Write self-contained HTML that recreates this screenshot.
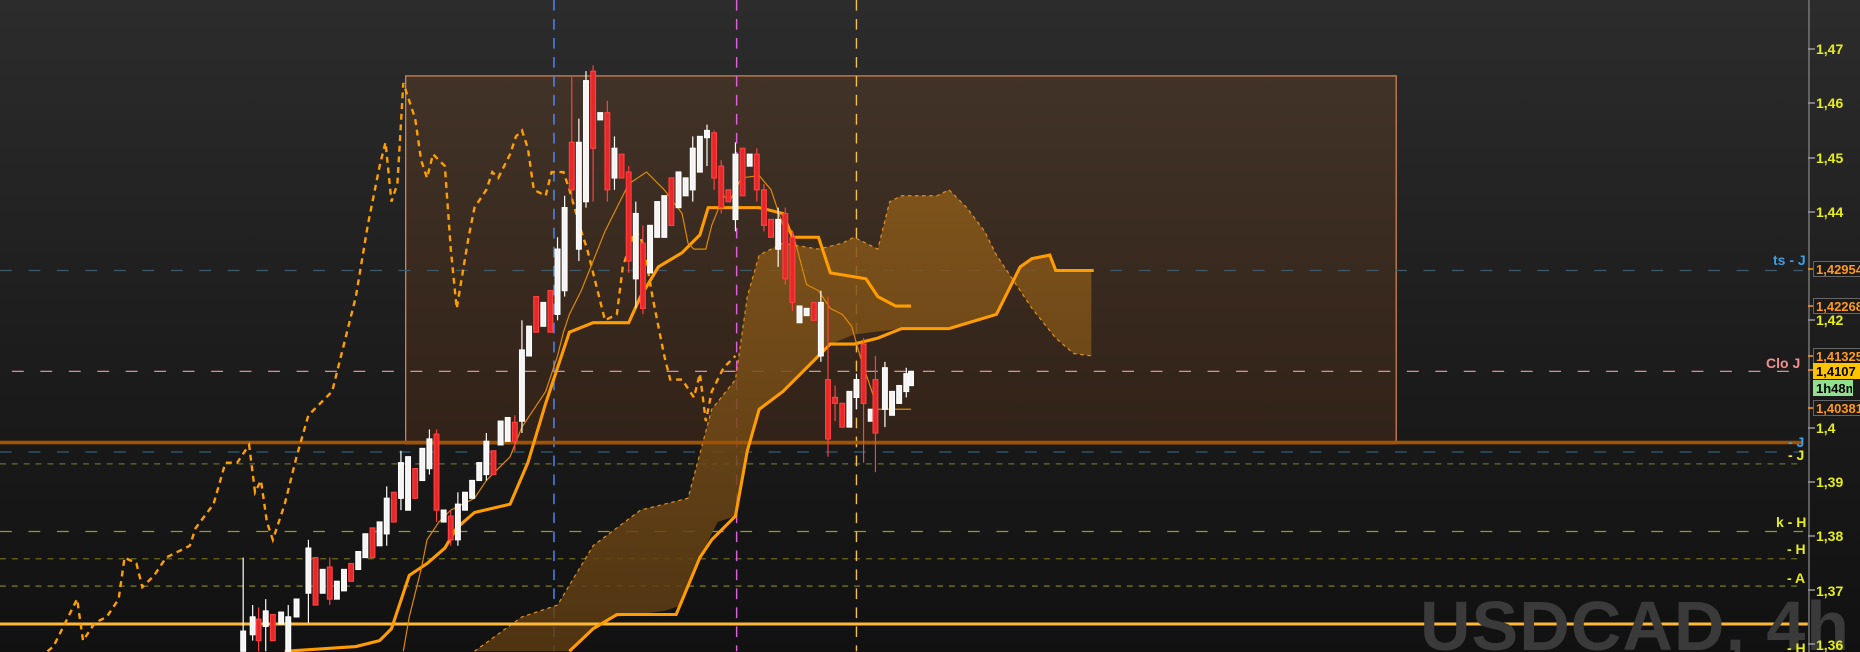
<!DOCTYPE html>
<html><head><meta charset="utf-8"><style>
html{margin:0;padding:0;width:1860px;height:652px;overflow:hidden;background:#111;}
body{margin:0;padding:0;width:1860px;height:652px;overflow:hidden;position:relative;background:linear-gradient(#2c2c2c,#1c1c1c 55%,#111);font-family:"Liberation Sans",sans-serif;}
svg{position:absolute;left:0;top:0;}
.t{position:absolute;font-weight:bold;font-size:14px;color:#e6ee1a;line-height:16px;white-space:nowrap;}
.b{position:absolute;left:1813px;width:52px;height:16px;font-weight:bold;font-size:13px;line-height:15px;color:#ff9a1e;background:#1a1a1a;border:1px solid #666;padding-left:2px;box-sizing:border-box;overflow:hidden;white-space:nowrap;}
.l{position:absolute;font-weight:bold;font-size:14px;line-height:16px;white-space:nowrap;}
</style></head><body>
<svg width="1860" height="652" viewBox="0 0 1568 549.6" preserveAspectRatio="none">
<defs>
<linearGradient id="bx" x1="0" y1="0" x2="0" y2="1"><stop offset="0" stop-color="#4a3628" stop-opacity=".75"/><stop offset="1" stop-color="#3a2518" stop-opacity=".75"/></linearGradient>
<linearGradient id="cl" x1="0" y1="0" x2="0" y2="1"><stop offset="0" stop-color="#8a5a1a" stop-opacity=".85"/><stop offset="1" stop-color="#5a3a12" stop-opacity=".85"/></linearGradient>
</defs>
<rect x="342" y="64" width="835" height="310" fill="url(#bx)" stroke="#e08a55" stroke-width="1"/>
<g stroke-dasharray="10,14" stroke-width="1" fill="none">
<line x1="0" y1="228" x2="1520" y2="228" stroke="#3f5a6a"/>
<line x1="10" y1="313" x2="1520" y2="313" stroke="#f0a0a8"/>
<line x1="0" y1="381" x2="1520" y2="381" stroke="#2f5f78"/>
<line x1="0" y1="391" x2="1520" y2="391" stroke="#6a6a30" stroke-dasharray="5,5"/>
<line x1="0" y1="448" x2="1520" y2="448" stroke="#9a9a20"/>
<line x1="0" y1="471" x2="1520" y2="471" stroke="#6a6a20" stroke-dasharray="5,5"/>
<line x1="0" y1="494" x2="1520" y2="494" stroke="#8a8a20" stroke-dasharray="5,5"/>
</g>
<g stroke-dasharray="9,7" stroke-width="1.2">
<line x1="467" y1="0" x2="467" y2="549" stroke="#4a8cff"/>
<line x1="621" y1="0" x2="621" y2="549" stroke="#e060e0"/>
<line x1="722" y1="0" x2="722" y2="549" stroke="#f0c050"/>
</g>
<polygon fill="url(#cl)" points="400,549 440,520 470,510 500,460 540,430 580,420 600,345 620,320 630,250 640,215 660,205 690,210 710,205 720,200 740,210 750,170 760,165 790,165 800,160 815,175 830,195 840,215 850,230 870,260 890,285 905,298 920,300 920,228 890,228 885,215 870,218 860,225 850,245 840,265 800,277 760,277 720,282 700,290 680,310 660,330 640,345 630,380 620,435 605,440 590,470 575,510 560,515 520,520 500,530 480,549"/>
<polyline fill="none" stroke="#e09020" stroke-width="1" stroke-dasharray="3,3" points="400,549 440,520 470,510 500,460 540,430 580,420 600,345 620,320 630,250 640,215 660,205 690,210 710,205 720,200 740,210 750,170 760,165 790,165 800,160 815,175 830,195 840,215 850,230 870,260 890,285 905,298 920,300"/>
<line x1="0" y1="373" x2="1520" y2="373" stroke="#a35200" stroke-width="3"/>
<line x1="0" y1="526" x2="1524" y2="526" stroke="#ffb838" stroke-width="2.5"/>
<polyline fill="none" stroke="#ff9c00" stroke-width="2.6" points="480,549 500,530 520,518 570,518 590,470 600,455 620,435 630,380 640,345 660,330 680,310 700,290 720,290 740,285 760,277 800,277 840,265 850,245 860,225 870,218 885,215 890,228 922,228"/>
<polyline fill="none" stroke="#ff9c00" stroke-width="2.6" points="240,549 300,545 320,540 330,530 345,485 360,475 375,462 385,445 400,432 430,425 445,390 460,340 470,310 480,280 500,272 530,272 540,250 555,225 575,213 590,198 597,175 640,175 660,180 668,200 690,200 700,230 730,235 740,250 755,258 768,258"/>
<polyline fill="none" stroke="#ffa000" stroke-width="2" stroke-dasharray="5,4" points="40,549 45,545 60,515 65,505 70,540 80,525 90,520 100,505 105,470 115,475 120,495 130,485 140,470 150,465 160,460 165,445 180,425 190,390 200,390 210,375 215,415 220,405 225,440 230,455 240,425 250,385 260,350 270,340 280,330 290,290 300,250 310,190 320,140 325,120 330,170 335,155 340,70 345,85 350,100 355,135 360,150 365,130 375,140 380,210 385,260 395,200 400,175 410,160 415,145 420,150 430,130 435,115 440,110 445,125 450,160 460,165 465,145 475,145 480,160 490,195 495,210 505,250 510,270 520,265 525,225 530,210 535,195 540,200 545,220 550,250 555,275 560,300 565,320 575,320 585,335 590,315 595,355 600,330 610,310 620,300"/>
<polyline fill="none" stroke="#e08a00" stroke-width="1" points="340,549 345,520 355,480 360,455 370,440 380,430 390,425 400,420 410,405 420,395 430,385 440,360 450,345 460,330 470,300 475,280 480,265 490,245 500,220 510,195 520,175 530,155 545,145 560,160 575,180 580,205 585,210 595,210 600,190 610,165 615,170 620,160 625,150 640,148 650,160 660,190 668,195 680,240 690,245 700,260 710,265 718,275 725,300 735,330 740,345 768,345"/>
<g stroke-width="1">
<g stroke="#fff" fill="#f4f4f4">
<line x1="205" y1="470" x2="205" y2="549"/><rect x="203" y="532" width="4" height="17"/>
<line x1="213" y1="510" x2="213" y2="540"/><rect x="211" y="520" width="4" height="15"/>
<line x1="224" y1="505" x2="224" y2="549"/><rect x="222" y="515" width="4" height="13"/>
<rect x="235" y="516" width="4" height="10"/>
<line x1="243" y1="510" x2="243" y2="549"/><rect x="241" y="520" width="4" height="29"/>
<rect x="248" y="505" width="4" height="15"/>
<line x1="260" y1="455" x2="260" y2="525"/><rect x="258" y="462" width="4" height="38"/>
<rect x="270" y="480" width="4" height="20"/>
<rect x="282" y="490" width="4" height="15"/>
<rect x="288" y="480" width="4" height="18"/>
<rect x="300" y="465" width="4" height="15"/>
<rect x="306" y="450" width="4" height="20"/>
<rect x="318" y="440" width="4" height="20"/>
<line x1="326" y1="410" x2="326" y2="460"/><rect x="324" y="420" width="4" height="30"/>
<line x1="338" y1="380" x2="338" y2="430"/><rect x="336" y="390" width="4" height="30"/>
<rect x="342" y="385" width="4" height="45"/>
<rect x="354" y="378" width="4" height="27"/>
<line x1="362" y1="362" x2="362" y2="400"/><rect x="360" y="370" width="4" height="25"/>
<rect x="372" y="430" width="4" height="10"/>
<line x1="386" y1="415" x2="386" y2="460"/><rect x="384" y="425" width="4" height="30"/>
<rect x="390" y="415" width="4" height="15"/>
<rect x="396" y="405" width="4" height="15"/>
<rect x="402" y="390" width="4" height="15"/>
<line x1="410" y1="365" x2="410" y2="405"/><rect x="408" y="372" width="4" height="28"/>
<rect x="420" y="355" width="4" height="20"/>
<rect x="426" y="352" width="4" height="20"/>
<line x1="440" y1="270" x2="440" y2="365"/><rect x="438" y="295" width="4" height="60"/>
<rect x="444" y="275" width="4" height="25"/>
<rect x="456" y="255" width="4" height="20"/>
<line x1="470" y1="200" x2="470" y2="270"/><rect x="468" y="210" width="4" height="55"/>
<line x1="476" y1="165" x2="476" y2="250"/><rect x="474" y="175" width="4" height="70"/>
<line x1="488" y1="100" x2="488" y2="220"/><rect x="486" y="120" width="4" height="90"/>
<line x1="494" y1="60" x2="494" y2="175"/><rect x="492" y="68" width="4" height="102"/>
<rect x="504" y="95" width="4" height="6"/>
<line x1="518" y1="115" x2="518" y2="160"/><rect x="516" y="125" width="4" height="25"/>
<line x1="536" y1="170" x2="536" y2="260"/><rect x="534" y="180" width="4" height="55"/>
<rect x="546" y="190" width="4" height="40"/>
<rect x="552" y="170" width="4" height="30"/>
<rect x="558" y="165" width="4" height="35"/>
<rect x="570" y="145" width="4" height="30"/>
<rect x="576" y="150" width="4" height="15"/>
<line x1="584" y1="115" x2="584" y2="170"/><rect x="582" y="125" width="4" height="35"/>
<rect x="588" y="115" width="4" height="30"/>
<line x1="596" y1="105" x2="596" y2="140"/><rect x="594" y="110" width="4" height="6"/>
<line x1="620" y1="120" x2="620" y2="195"/><rect x="618" y="130" width="4" height="55"/>
<rect x="630" y="130" width="4" height="10"/>
<line x1="656" y1="175" x2="656" y2="225"/><rect x="654" y="185" width="4" height="25"/>
<rect x="672" y="258" width="4" height="14"/>
<rect x="678" y="260" width="4" height="6"/>
<line x1="692" y1="245" x2="692" y2="305"/><rect x="690" y="255" width="4" height="45"/>
<rect x="714" y="330" width="4" height="30"/>
<line x1="722" y1="315" x2="722" y2="345"/><rect x="720" y="320" width="4" height="15"/>
<rect x="732" y="345" width="4" height="10"/>
<line x1="746" y1="305" x2="746" y2="360"/><rect x="744" y="310" width="4" height="35"/>
<rect x="750" y="330" width="4" height="20"/>
<rect x="756" y="325" width="4" height="15"/>
<line x1="764" y1="310" x2="764" y2="335"/><rect x="762" y="315" width="4" height="15"/>
<rect x="766" y="313" width="4" height="12"/>
</g>
<g stroke="#ff4040" fill="#e82828">
<line x1="218" y1="512" x2="218" y2="549"/><rect x="216" y="522" width="4" height="18"/>
<rect x="228" y="518" width="4" height="22"/>
<rect x="264" y="470" width="4" height="40"/>
<line x1="278" y1="470" x2="278" y2="510"/><rect x="276" y="478" width="4" height="27"/>
<rect x="294" y="475" width="4" height="15"/>
<rect x="312" y="445" width="4" height="25"/>
<rect x="330" y="415" width="4" height="25"/>
<rect x="348" y="395" width="4" height="25"/>
<line x1="368" y1="362" x2="368" y2="440"/><rect x="366" y="366" width="4" height="64"/>
<line x1="380" y1="430" x2="380" y2="460"/><rect x="378" y="435" width="4" height="20"/>
<rect x="414" y="380" width="4" height="20"/>
<line x1="434" y1="350" x2="434" y2="380"/><rect x="432" y="356" width="4" height="16"/>
<rect x="450" y="250" width="4" height="30"/>
<rect x="462" y="245" width="4" height="35"/>
<line x1="482" y1="65" x2="482" y2="170"/><rect x="480" y="120" width="4" height="40"/>
<line x1="500" y1="55" x2="500" y2="170"/><rect x="498" y="60" width="4" height="65"/>
<line x1="512" y1="85" x2="512" y2="170"/><rect x="510" y="95" width="4" height="65"/>
<rect x="522" y="130" width="4" height="20"/>
<line x1="530" y1="140" x2="530" y2="230"/><rect x="528" y="145" width="4" height="75"/>
<line x1="542" y1="190" x2="542" y2="265"/><rect x="540" y="205" width="4" height="55"/>
<rect x="564" y="150" width="4" height="40"/>
<line x1="602" y1="110" x2="602" y2="160"/><rect x="600" y="112" width="4" height="38"/>
<line x1="608" y1="135" x2="608" y2="180"/><rect x="606" y="140" width="4" height="35"/>
<rect x="612" y="160" width="4" height="10"/>
<rect x="624" y="125" width="4" height="40"/>
<line x1="638" y1="125" x2="638" y2="170"/><rect x="636" y="130" width="4" height="30"/>
<line x1="644" y1="155" x2="644" y2="195"/><rect x="642" y="160" width="4" height="30"/>
<rect x="648" y="185" width="4" height="15"/>
<line x1="662" y1="175" x2="662" y2="240"/><rect x="660" y="180" width="4" height="55"/>
<line x1="668" y1="195" x2="668" y2="262"/><rect x="666" y="200" width="4" height="55"/>
<rect x="684" y="255" width="4" height="15"/>
<line x1="698" y1="250" x2="698" y2="385"/><rect x="696" y="320" width="4" height="50"/>
<line x1="704" y1="325" x2="704" y2="355"/><rect x="702" y="335" width="4" height="5"/>
<rect x="708" y="340" width="4" height="20"/>
<line x1="728" y1="285" x2="728" y2="390"/><rect x="726" y="290" width="4" height="50"/>
<line x1="738" y1="300" x2="738" y2="398"/><rect x="736" y="320" width="4" height="45"/>
</g>
</g>
<line x1="1525" y1="0" x2="1525" y2="549.6" stroke="#7a7a7a" stroke-width="1.2"/>
</svg>
<div style="position:absolute;left:1420px;top:586px;height:66px;overflow:hidden;font-size:70px;font-weight:bold;color:#3a3a3a;letter-spacing:1px;line-height:80px;white-space:nowrap;">USDCAD, 4h</div>
<svg width="1860" height="652">
<g stroke="#999" stroke-width="1.5">
<line x1="1808" y1="49" x2="1815" y2="49"/><line x1="1808" y1="103" x2="1815" y2="103"/><line x1="1808" y1="158" x2="1815" y2="158"/><line x1="1808" y1="212" x2="1815" y2="212"/><line x1="1808" y1="320" x2="1815" y2="320"/><line x1="1808" y1="428" x2="1815" y2="428"/><line x1="1808" y1="482" x2="1815" y2="482"/><line x1="1808" y1="536" x2="1815" y2="536"/><line x1="1808" y1="590" x2="1815" y2="590"/><line x1="1808" y1="644" x2="1815" y2="644"/>
</g>
<g stroke="#ff9a1e" stroke-width="1.5"><line x1="1808" y1="269" x2="1814" y2="269"/><line x1="1808" y1="306" x2="1814" y2="306"/><line x1="1808" y1="356" x2="1814" y2="356"/><line x1="1808" y1="370" x2="1814" y2="370"/><line x1="1808" y1="408" x2="1814" y2="408"/></g>
</svg>
<div class="t" style="left:1816px;top:41px">1,47</div>
<div class="t" style="left:1816px;top:95px">1,46</div>
<div class="t" style="left:1816px;top:150px">1,45</div>
<div class="t" style="left:1816px;top:204px">1,44</div>
<div class="t" style="left:1816px;top:312px">1,42</div>
<div class="t" style="left:1816px;top:420px">1,4</div>
<div class="t" style="left:1816px;top:474px">1,39</div>
<div class="t" style="left:1816px;top:528px">1,38</div>
<div class="t" style="left:1816px;top:583px">1,37</div>
<div class="t" style="left:1816px;top:637px">1,36</div>
<div class="b" style="top:261px">1,42954</div>
<div class="b" style="top:298px">1,42268</div>
<div class="b" style="top:348px">1,41325</div>
<div class="b" style="top:363px;background:#ffc400;color:#000;border-color:#ffc400">1,4107</div>
<div class="b" style="top:380px;width:40px;background:#90e090;color:#000;border-color:#90e090">1h48m</div>
<div class="b" style="top:400px">1,40381</div>
<div class="l" style="left:1773px;top:252px;color:#3aa0e8">ts - J</div>
<div class="l" style="left:1766px;top:355px;color:#f09090">Clo J</div>
<div class="l" style="left:1788px;top:434px;color:#3aa0e8">- J</div>
<div class="l" style="left:1788px;top:447px;color:#e6ee1a">- J</div>
<div class="l" style="left:1776px;top:514px;color:#e6ee1a">k - H</div>
<div class="l" style="left:1787px;top:541px;color:#e6ee1a">- H</div>
<div class="l" style="left:1787px;top:570px;color:#e6ee1a">- A</div>
<div class="l" style="left:1787px;top:640px;color:#e6ee1a">- H</div>
</body></html>
